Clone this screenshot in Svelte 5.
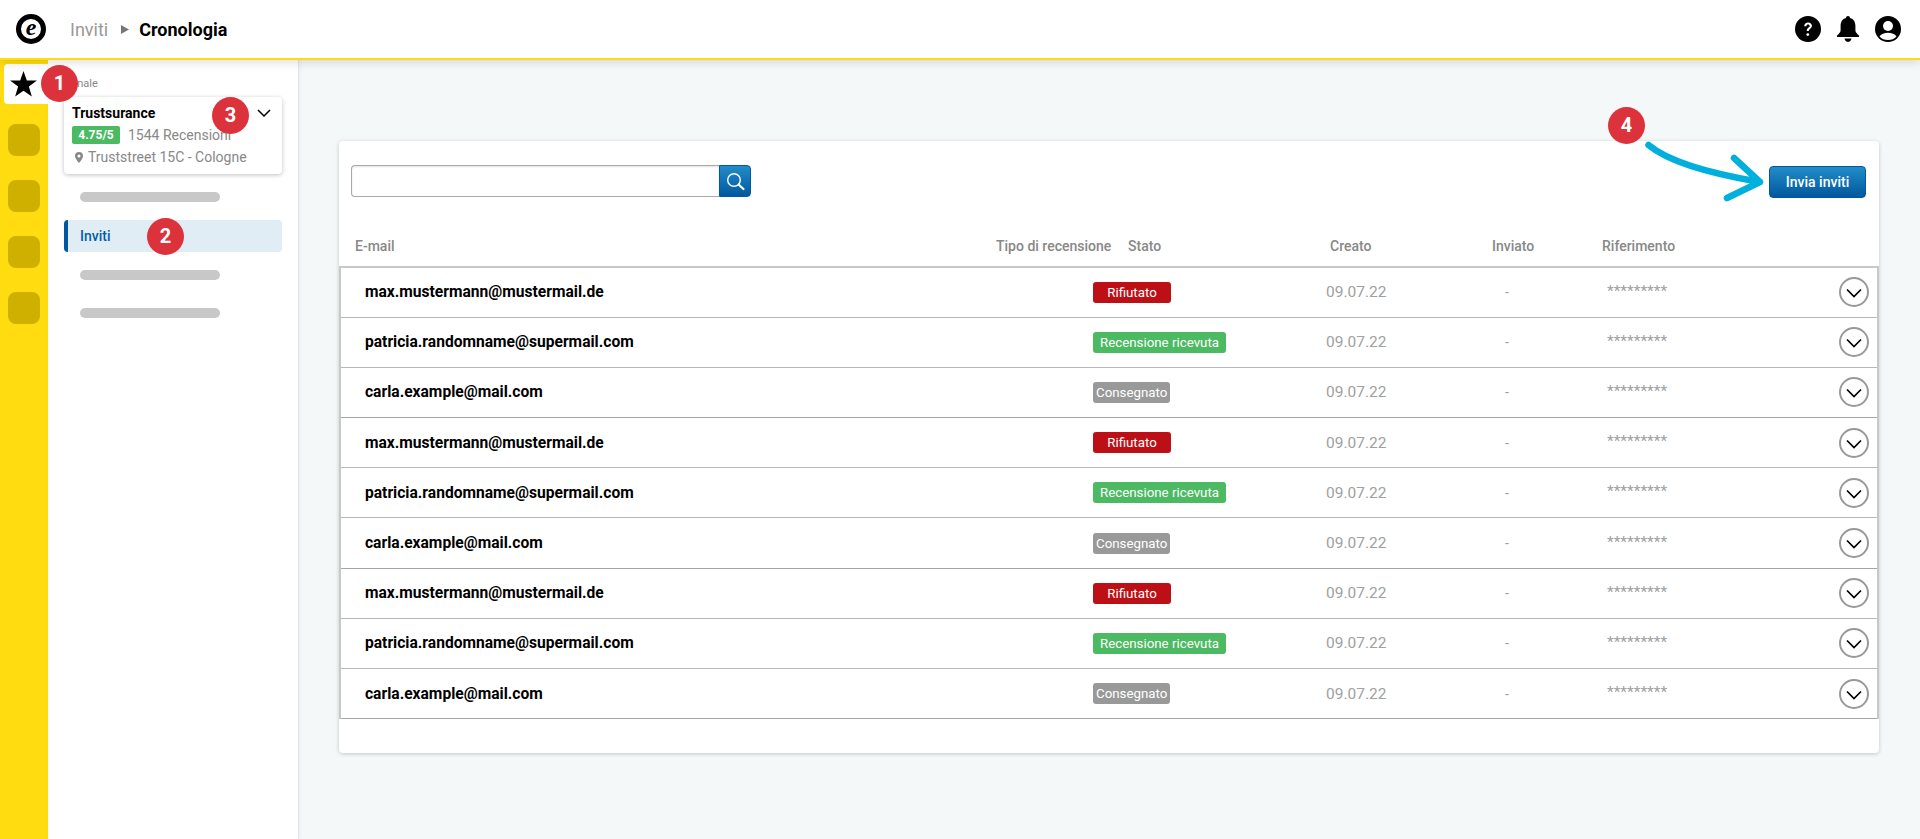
<script>
  const people = [
    { email: 'max.mustermann@mustermail.de', status: 'Rifiutato', kind: 'refused' },
    { email: 'patricia.randomname@supermail.com', status: 'Recensione ricevuta', kind: 'received' },
    { email: 'carla.example@mail.com', status: 'Consegnato', kind: 'delivered' },
  ]
  const rows = [...people, ...people, ...people]
</script>

<div class="page">
  <header class="topbar">
    <div class="logo"><span>e</span></div>
    <nav class="crumbs">
      <span class="crumb">Inviti</span>
      <svg class="crumb-arrow" width="8" height="9" viewBox="0 0 8 9"><path d="M0 0l8 4.5L0 9z" fill="#777" /></svg>
      <strong>Cronologia</strong>
    </nav>
    <div class="top-icons">
      <svg width="26" height="26" viewBox="0 0 26 26">
        <circle cx="13" cy="13" r="13" fill="#000" />
        <path d="M9.2 10.2c0-2.3 1.7-3.7 3.9-3.7s3.8 1.3 3.8 3.3c0 1.500-.8 2.300-1.900 3.100-.9.7-1.200 1.100-1.200 2.200h-2.100c0-1.800.5-2.500 1.600-3.400.9-.7 1.400-1.100 1.400-1.800 0-.9-.7-1.500-1.600-1.500-1 0-1.700.6-1.700 1.800z" fill="#fff" />
        <circle cx="12.800" cy="18.600" r="1.400" fill="#fff" />
      </svg>
      <svg width="24" height="26" viewBox="0 0 24 26">
        <path d="M12 0c1.200 0 2 .8 2 1.900 3.700.9 5.400 4 5.400 8v4.300c0 2 1.400 3.200 3.600 5.400v1.400H1v-1.400c2.200-2.200 3.600-3.400 3.600-5.400V9.900c0-4 1.700-7.100 5.400-8C10 .8 10.800 0 12 0z" fill="#000" />
        <path d="M8.500 22.400h7c-.4 2.100-1.800 3.400-3.500 3.400s-3.100-1.300-3.500-3.400z" fill="#000" />
      </svg>
      <svg width="26" height="26" viewBox="0 0 26 26">
        <circle cx="13" cy="13" r="13" fill="#000" />
        <circle cx="13" cy="10" r="5" fill="#fff" />
        <path d="M4.500 20.500c1.500-2.600 5-3.800 8.500-3.800s7 1.200 8.500 3.800C19.500 23 16.500 24 13 24s-6.500-1-8.500-3.500z" fill="#fff" />
      </svg>
    </div>
  </header>

  <div class="layout">
    <aside class="rail">
      <div class="rail-active">
        <svg width="27" height="26" viewBox="0 0 30 29"><path d="M15 0l3.700 10.500H30l-9 6.800 3.300 11.200L15 22l-9.300 6.500L9 17.300l-9-6.800h11.300z" fill="#000" /></svg>
      </div>
      <div class="rail-tile"></div>
      <div class="rail-tile"></div>
      <div class="rail-tile"></div>
      <div class="rail-tile"></div>
    </aside>

    <aside class="sidebar">
      <div class="side-label">Canale</div>
      <div class="channel">
        <div class="channel-name">
          Trustsurance
          <svg width="14" height="8" viewBox="0 0 14 8"><path d="M1 1l6 6 6-6" fill="none" stroke="#000" stroke-width="1.500" /></svg>
        </div>
        <div class="channel-score"><span class="score">4.75/5</span>1544 Recensioni</div>
        <div class="channel-place">
          <svg width="8" height="11" viewBox="0 0 8 11"><path fill-rule="evenodd" d="M4 0a4 4 0 0 1 4 4c0 2.500-4 7-4 7S0 6.500 0 4a4 4 0 0 1 4-4zm0 2.500a1.500 1.500 0 1 0 0 3 1.500 1.500 0 0 0 0-3z" fill="#888" /></svg>
          Truststreet 15C - Cologne
        </div>
      </div>
      <div class="skeleton first"></div>
      <div class="side-item">Inviti</div>
      <div class="skeleton second"></div>
      <div class="skeleton third"></div>
    </aside>

    <main class="main">
      <section class="card">
        <div class="toolbar">
          <div class="search">
            <input type="text" aria-label="Cerca" />
            <button class="search-btn" aria-label="Cerca">
              <svg width="19" height="19" viewBox="0 0 19 19">
                <circle cx="8" cy="8" r="6.300" fill="none" stroke="#fff" stroke-width="1.400" />
                <path d="M12.800 12.800l4.700 4.200" fill="none" stroke="#fff" stroke-width="2.200" stroke-linecap="round" />
              </svg>
            </button>
          </div>
          <button class="send">Invia inviti</button>
        </div>

        <div class="thead">
          <span>E-mail</span>
          <span>Tipo di recensione</span>
          <span>Stato</span>
          <span>Creato</span>
          <span>Inviato</span>
          <span>Riferimento</span>
        </div>

        <div class="tbody">
          {#each rows as row}
            <div class="row">
              <span class="email">{row.email}</span>
              <span><span class="tag {row.kind}">{row.status}</span></span>
              <span class="muted">09.07.22</span>
              <span class="muted dash">-</span>
              <span class="muted ref">*********</span>
              <span class="toggle">
                <svg width="30" height="30" viewBox="0 0 30 30">
                  <circle cx="15" cy="15" r="14" fill="#fff" stroke="#999" stroke-width="2" />
                  <path d="M8 12.500l7 7 7-7" fill="none" stroke="#000" stroke-width="1.700" />
                </svg>
              </span>
            </div>
          {/each}
        </div>
      </section>
    </main>
  </div>

  <span class="marker m1">1</span>
  <span class="marker m2">2</span>
  <span class="marker m3">3</span>
  <span class="marker m4">4</span>
  <svg class="pointer" width="125" height="70" viewBox="0 0 125 70">
    <path d="M3.500 6C25 24 68 35 115 43M89 19l26 24-33 16" fill="none" stroke="#00b0dc" stroke-width="6.500" stroke-linecap="round" stroke-linejoin="round" />
  </svg>
</div>

<style>
  :global(body) {
    margin: 0;
    background: #f5f8f9;
    font-family: Roboto, "Liberation Sans", sans-serif;
  }

  .page {
    position: relative;
    height: 839px;
    overflow: hidden;
  }

  .topbar {
    position: relative;
    z-index: 2;
    box-sizing: border-box;
    height: 60px;
    display: flex;
    align-items: center;
    background: #fff;
    border-bottom: 2px solid #ffdc0f;
    box-shadow: 0 2px 10px rgba(0, 0, 0, 0.14);
    padding: 0 19px 0 16px;
  }

  .logo {
    box-sizing: border-box;
    width: 30px;
    height: 30px;
    border: 5px solid #000;
    border-radius: 50%;
    display: flex;
    align-items: center;
    justify-content: center;
    background: #fff;
  }

  .logo span {
    font: italic 700 24px/1 "Liberation Serif", serif;
    margin-top: -5px;
  }

  .crumbs {
    display: flex;
    align-items: center;
    margin-left: 24px;
    font-size: 18px;
  }

  .crumb {
    color: #999;
  }

  .crumb-arrow {
    margin: 0 10px 0 13px;
  }

  .crumbs strong {
    font-weight: 700;
    color: #000;
  }

  .top-icons {
    margin-left: auto;
    display: flex;
    align-items: center;
    gap: 15px;
  }

  .layout {
    display: flex;
    height: 779px;
  }

  .rail {
    width: 48px;
    background: #ffdc0f;
    display: flex;
    flex-direction: column;
    align-items: flex-end;
    padding-top: 4px;
  }

  .rail-active {
    width: 44px;
    height: 40px;
    background: #fff;
    border-radius: 4px 0 0 4px;
    display: flex;
    align-items: center;
    padding-left: 6px;
    box-sizing: border-box;
    margin-bottom: 20px;
  }

  .rail-tile {
    width: 32px;
    height: 32px;
    margin: 0 8px 24px 0;
    background: #cfb000;
    border-radius: 8px;
  }

  .sidebar {
    box-sizing: border-box;
    width: 251px;
    padding: 17px 16px 0;
    background: #fff;
    border-right: 1px solid #e3e6e8;
    box-shadow: 1px 0 3px rgba(0, 0, 0, 0.05);
  }

  .side-label {
    font-size: 11px;
    line-height: 13px;
    color: #888;
    margin-bottom: 7px;
  }

  .channel {
    box-sizing: border-box;
    height: 77px;
    padding: 7px 8px;
    background: #fff;
    border-radius: 4px;
    box-shadow: 0 1px 4px rgba(0, 0, 0, 0.25);
  }

  .channel-name {
    display: flex;
    align-items: center;
    justify-content: space-between;
    padding-right: 3px;
    font-size: 14px;
    font-weight: 700;
    line-height: 18px;
    color: #000;
  }

  .channel-score {
    display: flex;
    align-items: center;
    margin-top: 4px;
    font-size: 14px;
    color: #888;
  }

  .score {
    box-sizing: border-box;
    width: 48px;
    height: 18px;
    margin-right: 8px;
    background: #4cb963;
    border-radius: 2px;
    color: #fff;
    font-size: 12px;
    font-weight: 700;
    line-height: 18px;
    text-align: center;
  }

  .channel-place {
    display: flex;
    align-items: center;
    gap: 5px;
    margin-top: 5px;
    padding-left: 3px;
    font-size: 14px;
    line-height: 16px;
    color: #888;
  }

  .skeleton {
    width: 140px;
    height: 10px;
    margin-left: 16px;
    background: #c8c8c8;
    border-radius: 5px;
  }

  .skeleton.first {
    margin-top: 18px;
  }

  .skeleton.second {
    margin-top: 18px;
  }

  .skeleton.third {
    margin-top: 28px;
  }

  .side-item {
    box-sizing: border-box;
    height: 32px;
    margin-top: 18px;
    padding-left: 12px;
    background: #e0edf5;
    border-left: 4px solid #00589e;
    border-radius: 4px;
    color: #005ea6;
    font-size: 14px;
    font-weight: 500;
    line-height: 32px;
  }

  .main {
    flex: 1;
    padding: 81px 41px 0 40px;
  }

  .card {
    height: 612px;
    background: #fff;
    border-radius: 4px;
    box-shadow: 0 1px 4px rgba(0, 0, 0, 0.2);
  }

  .toolbar {
    box-sizing: border-box;
    display: flex;
    align-items: flex-start;
    justify-content: space-between;
    height: 57px;
    padding: 24px 13px 0 12px;
  }

  .search {
    display: flex;
    width: 400px;
    height: 32px;
  }

  .search input {
    flex: 1;
    min-width: 0;
    box-sizing: border-box;
    border: 1px solid #aaa;
    border-right: 0;
    border-radius: 4px 0 0 4px;
    background: #fff;
    box-shadow: inset 0 1px 2px rgba(0, 0, 0, 0.12);
    outline: none;
  }

  .search-btn {
    width: 32px;
    padding: 0;
    display: flex;
    align-items: center;
    justify-content: center;
    border: 1px solid #00589e;
    border-radius: 0 4px 4px 0;
    background: linear-gradient(#238cc8, #00589e);
  }

  .send {
    box-sizing: border-box;
    width: 97px;
    height: 32px;
    margin-top: 1px;
    padding: 0;
    border: 1px solid #00589e;
    border-radius: 4px;
    background: linear-gradient(#238cc8, #00589e);
    color: #fff;
    font-family: inherit;
    font-size: 14px;
    font-weight: 500;
  }

  .thead {
    display: grid;
    grid-template-columns: 641px 132px 202px 162px 110px 1fr;
    align-items: center;
    box-sizing: border-box;
    height: 68px;
    padding: 28px 0 0 16px;
    color: #888;
    font-size: 14px;
    font-weight: 500;
  }

  .tbody {
    border: solid #c8c8c8;
    border-width: 2px 2px 0;
  }

  .row {
    display: grid;
    grid-template-columns: 728px 233px 179px 102px 1fr auto;
    align-items: center;
    box-sizing: border-box;
    height: 50.200px;
    padding-left: 24px;
    border-bottom: 1px solid #b8b8b8;
  }

  .row:nth-child(3n) {
    border-bottom-color: #a4a4a4;
  }

  .row:first-child {
    height: 49.700px;
  }

  .email {
    color: #000;
    font-size: 15.600px;
    font-weight: 700;
  }

  .muted {
    color: #a0a0a0;
    font-size: 15.500px;
  }

  .dash {
    font-size: 14px;
  }

  .ref {
    font-size: 15.500px;
    margin-top: -3px;
  }

  .tag {
    display: inline-block;
    box-sizing: border-box;
    height: 21px;
    padding: 0 7px;
    border-radius: 3px;
    color: #fff;
    font-size: 13.300px;
    line-height: 21px;
    vertical-align: middle;
  }

  .tag.refused {
    width: 78px;
    text-align: center;
    background: #bd1016;
  }

  .tag.received {
    background: #4cb963;
  }

  .tag.delivered {
    padding: 0 3px;
    background: #999;
  }

  .toggle {
    display: flex;
    justify-content: flex-end;
    padding-right: 8px;
  }

  .marker {
    position: absolute;
    z-index: 3;
    width: 37px;
    height: 37px;
    border-radius: 50%;
    background: #dc323c;
    color: #fff;
    font-size: 20px;
    font-weight: 700;
    line-height: 37px;
    text-align: center;
  }

  .m1 { left: 41px; top: 65px; }
  .m2 { left: 147px; top: 218px; }
  .m3 { left: 212px; top: 97px; }
  .m4 { left: 1608px; top: 107px; }

  .pointer {
    position: absolute;
    z-index: 3;
    left: 1645px;
    top: 139px;
  }
</style>
